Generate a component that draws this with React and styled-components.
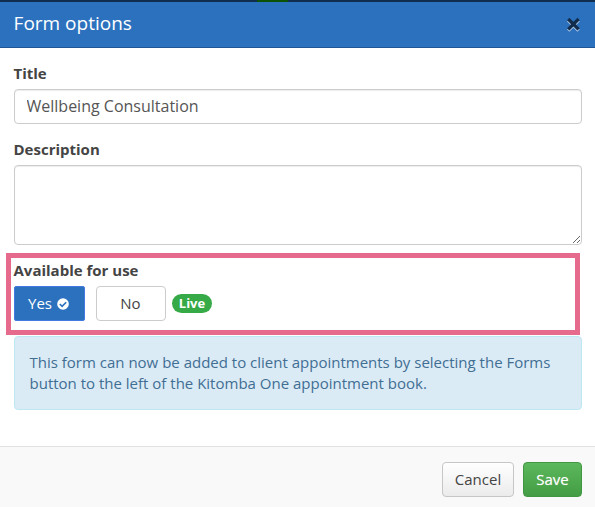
import React from 'react';
import styled, { createGlobalStyle } from 'styled-components';

const GlobalStyle = createGlobalStyle`
  *, *::before, *::after {
    box-sizing: border-box;
  }

  body {
    margin: 0;
    background: #fff;
    color: #444;
    font-family: "Open Sans", sans-serif;
    font-size: 15px;
    line-height: 21px;
  }
`;

const Modal = styled.div`
  display: flex;
  flex-direction: column;
  height: 507px;
  overflow: hidden;
`;

// sliver of the page's nav bar behind the modal
const NavEdge = styled.div`
  flex: none;
  height: 2px;
  padding-left: 257px;
  background: #0f2d4e;
`;

const ActiveTab = styled.div`
  width: 31px;
  height: 2px;
  background: #0b5206;
`;

const Header = styled.header`
  flex: none;
  display: flex;
  align-items: center;
  justify-content: space-between;
  height: 46px;
  padding: 0 13px 3px 13.6px;
  background: #2c71be;
  border-bottom: 1px solid #1f5594;
`;

const Heading = styled.h3`
  margin: 0;
  color: #fff;
  font-size: 19px;
  font-weight: 400;
  line-height: 26px;
`;

const CloseButton = styled.button`
  display: flex;
  margin: 3px 0 0;
  padding: 0;
  border: 0;
  background: none;
`;

const Body = styled.main`
  flex: none;
  height: 398px;
  padding: 15px 13px 0 14px;
`;

const Field = styled.div`
  position: relative;
  margin-bottom: 15px;
`;

const Label = styled.label`
  display: block;
  margin: 0 0 5px -0.5px;
  font-weight: 700;
`;

const Input = styled.input`
  display: block;
  width: 100%;
  height: 35px;
  padding: 5px 12px 7px 11.5px;
  border: 1px solid #ccc;
  border-radius: 4px;
  box-shadow: inset 0 1px 1px rgba(0, 0, 0, 0.075);
  color: #555;
  font: 16px/21px "Open Sans", sans-serif;
  outline: none;
`;

const TextArea = styled(Input).attrs({ as: 'textarea' })`
  height: 80px;
  resize: vertical;
`;

const Highlight = styled.div`
  position: absolute;
  top: -7px;
  left: -8px;
  width: 574px;
  height: 82px;
  border: 5px solid #e66a8c;
  pointer-events: none;
`;

const Choices = styled.div`
  display: flex;
  align-items: center;
`;

const Choice = styled.button`
  display: flex;
  align-items: center;
  justify-content: center;
  gap: 5px;
  width: ${(props) => (props.$active ? '71px' : '70px')};
  height: 35px;
  margin-right: ${(props) => (props.$active ? '11px' : '6px')};
  padding: 0 ${(props) => (props.$active ? '2px' : '1px')} 0 0;
  border: 1px solid ${(props) => (props.$active ? '#4379e0' : '#ccc')};
  border-radius: ${(props) => (props.$active ? '2px' : '4px')};
  background: ${(props) => (props.$active ? '#2c71be' : '#fff')};
  color: ${(props) => (props.$active ? '#fff' : '#444')};
  font: 15px/21px "Open Sans", sans-serif;
`;

const Badge = styled.span`
  width: 40px;
  height: 19px;
  border-radius: 10px;
  background: #35aa47;
  color: #fff;
  font-size: 13px;
  font-weight: 700;
  line-height: 19px;
  text-align: center;
`;

const Info = styled.div`
  height: 74px;
  padding: 15px 15px 15px 14.5px;
  border: 1px solid #bce8f1;
  border-radius: 4px;
  background: #dbebf6;
  color: #416e93;
`;

const Footer = styled.footer`
  flex: 1;
  display: flex;
  align-items: flex-start;
  justify-content: flex-end;
  gap: 9px;
  padding: 15px 13px 0;
  border-top: 1px solid #e2e2e2;
  background: #f9f9f9;
`;

const Button = styled.button`
  width: ${(props) => (props.$primary ? '59px' : '72px')};
  height: 35px;
  padding: 0;
  border: 1px solid ${(props) => (props.$primary ? '#419641' : '#c6c6c6')};
  border-radius: 4px;
  background: ${(props) =>
    props.$primary
      ? 'linear-gradient(#5cb85c, #449d44)'
      : 'linear-gradient(#fff, #ebebeb)'};
  color: ${(props) => (props.$primary ? '#fff' : '#444')};
  font: 15px/21px "Open Sans", sans-serif;
  text-shadow: ${(props) => (props.$primary ? '0 0 1px rgba(255, 255, 255, 0.5)' : 'none')};
`;

const CloseIcon = () => (
  <svg width="17" height="17" viewBox="0 0 17 17" fill="none">
    <path d="M3.2 4.2l10.4 10.4M13.6 4.2L3.2 14.6" stroke="#a9c5e5" strokeWidth="3.4" />
    <path d="M3.2 3l10.4 10.4M13.6 3L3.2 13.4" stroke="#122d4c" strokeWidth="3.2" />
  </svg>
);

const CheckIcon = () => (
  <svg width="12" height="12" viewBox="0 0 12 12" fill="none">
    <circle cx="6" cy="6" r="5.8" fill="#fff" />
    <path d="M2.8 6l2.3 2.3 4.1-4.1" stroke="#2c71be" strokeWidth="1.6" />
  </svg>
);

const App = () => (
  <>
    <GlobalStyle />
    <Modal>
      <NavEdge>
        <ActiveTab />
      </NavEdge>
      <Header>
        <Heading>Form options</Heading>
        <CloseButton aria-label="Close">
          <CloseIcon />
        </CloseButton>
      </Header>
      <Body>
        <Field>
          <Label htmlFor="title">Title</Label>
          <Input id="title" defaultValue="Wellbeing Consultation" />
        </Field>
        <Field>
          <Label htmlFor="description">Description</Label>
          <TextArea id="description" />
        </Field>
        <Field>
          <Label as="div">Available for use</Label>
          <Choices>
            <Choice $active>
              Yes <CheckIcon />
            </Choice>
            <Choice>No</Choice>
            <Badge>Live</Badge>
          </Choices>
          <Highlight />
        </Field>
        <Info>
          This form can now be added to client appointments by selecting the Forms button to the
          left of the Kitomba One appointment book.
        </Info>
      </Body>
      <Footer>
        <Button>Cancel</Button>
        <Button $primary>Save</Button>
      </Footer>
    </Modal>
  </>
);

export default App;
